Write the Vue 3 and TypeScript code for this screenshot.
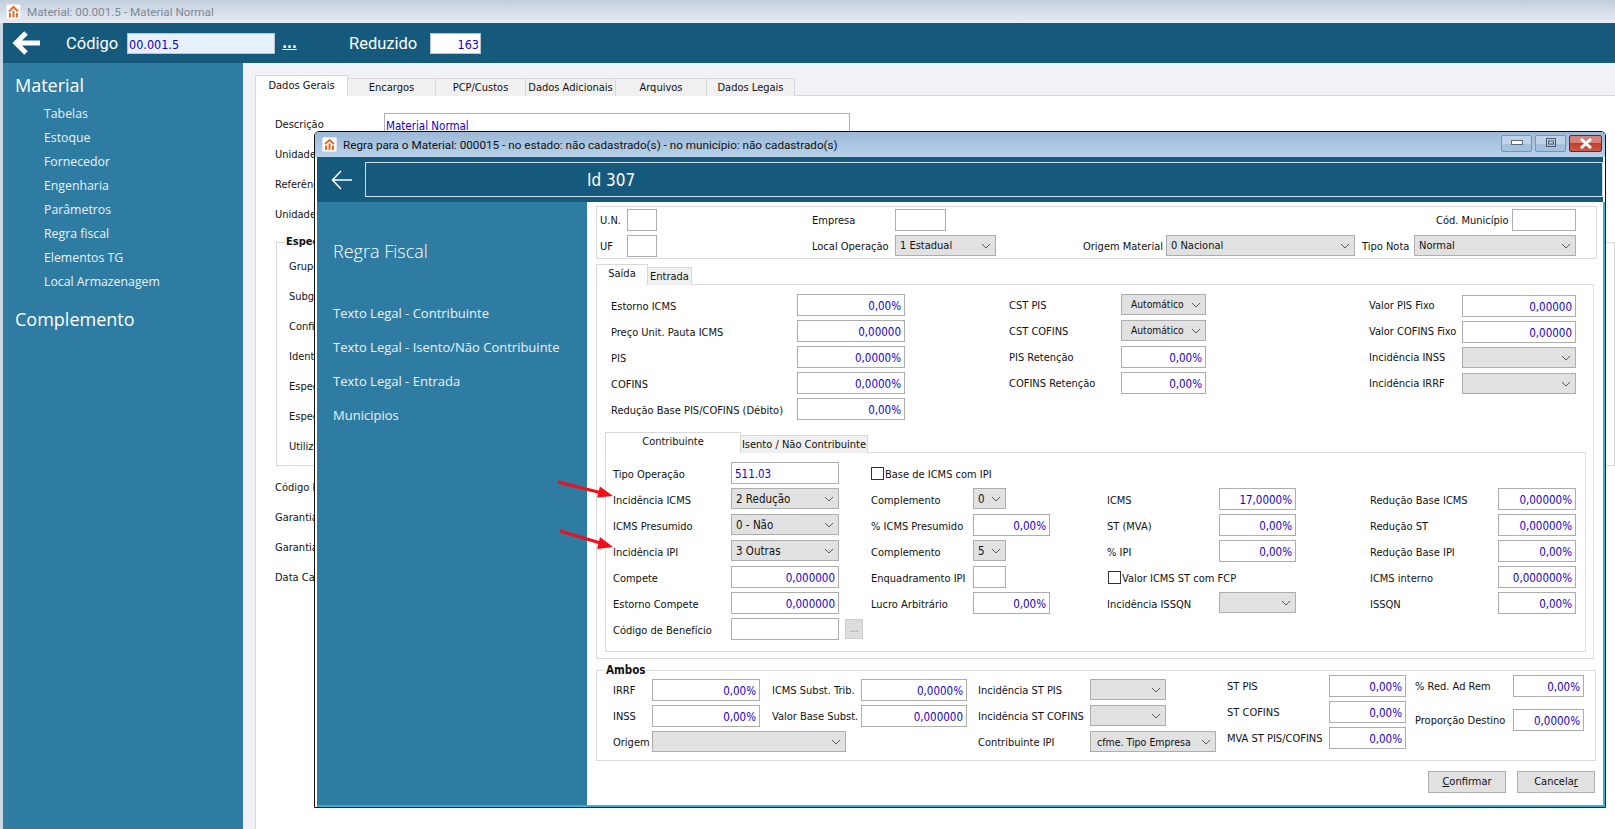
<script setup lang="ts">
import { h } from 'vue'
import type { FunctionalComponent, VNode } from 'vue'

type Fld = { l?: string; lw?: number; k: 'num' | 'sel' | 'txt' | 'box' | 'chk'; v?: string; w?: number; ml?: number; mt?: number; ip?: number; fs?: number }
type Col = { w: number; top: number; lm?: number; rows: Fld[][] }

const chevron = () =>
  h('svg', { class: 'f-chev', width: 10, height: 6, viewBox: '0 0 10 6' }, [
    h('polyline', { points: '1,1 5,5 9,1', fill: 'none', stroke: '#5a5a5a', 'stroke-width': 1 })
  ])

function control(f: Fld): VNode {
  const style = { width: `${f.w}px` }
  if (f.k === 'sel') {
    return h('div', { class: 'f-sel', style }, [
      h('span', { class: 'f-sel-v', style: { paddingLeft: f.ip ? `${f.ip}px` : undefined, fontSize: f.fs ? `${f.fs}px` : undefined } }, f.v ?? ''),
      chevron()
    ])
  }
  if (f.k === 'num') return h('div', { class: 'f-num', style }, f.v ?? '')
  if (f.k === 'txt') return h('div', { class: 'f-txt', style }, f.v ?? '')
  return h('div', { class: 'f-box', style })
}

function field(f: Fld, lm: number): VNode[] {
  const mt = `${lm}px`
  if (f.k === 'chk') {
    return [
      h('span', { class: 'f-check', style: { marginLeft: `${f.ml ?? 0}px` } }),
      h('span', { class: 'f-check-l', style: { marginTop: mt } }, f.l)
    ]
  }
  const out: VNode[] = []
  if (f.l !== undefined) {
    out.push(h('span', { class: 'f-lab', style: { width: `${f.lw}px`, marginLeft: f.ml ? `${f.ml}px` : undefined, marginTop: mt } }, f.l))
  }
  out.push(control(f))
  return out
}

const Cols: FunctionalComponent<{ cols: Col[]; pad?: number }> = (p) =>
  h(
    'div',
    { class: 'f-cols', style: { paddingLeft: `${p.pad ?? 0}px` } },
    p.cols.map((c) =>
      h(
        'div',
        { class: 'f-col', style: { width: `${c.w}px`, marginTop: `${c.top}px` } },
        c.rows.map((r) =>
          h(
            'div',
            { class: 'f-row', style: { marginTop: r[0]?.mt ? `${r[0].mt}px` : undefined } },
            r.flatMap((f) => field(f, c.lm ?? 4))
          )
        )
      )
    )
  )
Cols.props = ['cols', 'pad']

const menu = ['Tabelas', 'Estoque', 'Fornecedor', 'Engenharia', 'Parâmetros', 'Regra fiscal', 'Elementos TG', 'Local Armazenagem']
const rules = ['Texto Legal - Contribuinte', 'Texto Legal - Isento/Não Contribuinte', 'Texto Legal - Entrada', 'Municipios']
const bgTabs = [
  { t: 'Dados Gerais', w: 93, on: true },
  { t: 'Encargos', w: 88 },
  { t: 'PCP/Custos', w: 90 },
  { t: 'Dados Adicionais', w: 90 },
  { t: 'Arquivos', w: 91 },
  { t: 'Dados Legais', w: 88 }
]
const bgGroup = ['Grupo', 'Subgrupo', 'Configuração', 'Identificação', 'Especificação', 'Especificação', 'Utilização']
const bgAfter = ['Código F', 'Garantia', 'Garantia', 'Data Ca']

const topCols: Col[] = [
  { w: 212, top: 2, lm: 2, rows: [[{ l: 'U.N.', lw: 27, k: 'box', w: 30 }], [{ l: 'UF', lw: 27, k: 'box', w: 30 }]] },
  { w: 271, top: 2, lm: 2, rows: [[{ l: 'Empresa', lw: 83, k: 'box', w: 51 }], [{ l: 'Local Operação', lw: 83, k: 'sel', v: '1 Estadual', w: 101, fs: 11 }]] },
  {
    w: 494,
    top: 2,
    lm: 2,
    rows: [
      [{ l: 'Cód. Município', lw: 76, ml: 353, k: 'box', w: 64 }],
      [
        { l: 'Origem Material', lw: 83, k: 'sel', v: '0 Nacional', w: 189, fs: 11 },
        { l: 'Tipo Nota', lw: 52, ml: 7, k: 'sel', v: 'Normal', w: 162, fs: 11 }
      ]
    ]
  }
]

const saidaCols: Col[] = [
  {
    w: 398,
    top: 9,
    rows: [
      [{ l: 'Estorno ICMS', lw: 186, k: 'num', v: '0,00%', w: 108 }],
      [{ l: 'Preço Unit. Pauta ICMS', lw: 186, k: 'num', v: '0,00000', w: 108 }],
      [{ l: 'PIS', lw: 186, k: 'num', v: '0,0000%', w: 108 }],
      [{ l: 'COFINS', lw: 186, k: 'num', v: '0,0000%', w: 108 }],
      [{ l: 'Redução Base PIS/COFINS (Débito)', lw: 186, k: 'num', v: '0,00%', w: 108 }]
    ]
  },
  {
    w: 360,
    top: 9,
    lm: 1,
    rows: [
      [{ l: 'CST PIS', lw: 112, k: 'sel', v: 'Automático', w: 85, ip: 5, fs: 10.2 }],
      [{ l: 'CST COFINS', lw: 112, k: 'sel', v: 'Automático', w: 85, ip: 5, fs: 10.2 }],
      [{ l: 'PIS Retenção', lw: 112, k: 'num', v: '0,00%', w: 85 }],
      [{ l: 'COFINS Retenção', lw: 112, k: 'num', v: '0,00%', w: 85 }]
    ]
  },
  {
    w: 207,
    top: 10,
    lm: -1,
    rows: [
      [{ l: 'Valor PIS Fixo', lw: 93, k: 'num', v: '0,00000', w: 114 }],
      [{ l: 'Valor COFINS Fixo', lw: 93, k: 'num', v: '0,00000', w: 114 }],
      [{ l: 'Incidência INSS', lw: 93, k: 'sel', w: 114 }],
      [{ l: 'Incidência IRRF', lw: 93, k: 'sel', w: 114 }]
    ]
  }
]

const contribCols: Col[] = [
  {
    w: 258,
    top: 9,
    rows: [
      [{ l: 'Tipo Operação', lw: 118, k: 'txt', v: '511.03', w: 108 }],
      [{ l: 'Incidência ICMS', lw: 118, k: 'sel', v: '2 Redução', w: 108 }],
      [{ l: 'ICMS Presumido', lw: 118, k: 'sel', v: '0 - Não', w: 108 }],
      [{ l: 'Incidência IPI', lw: 118, k: 'sel', v: '3 Outras', w: 108 }],
      [{ l: 'Compete', lw: 118, k: 'num', v: '0,000000', w: 108 }],
      [{ l: 'Estorno Compete', lw: 118, k: 'num', v: '0,000000', w: 108 }],
      [{ l: 'Código de Benefício', lw: 118, k: 'box', w: 108 }]
    ]
  },
  {
    w: 236,
    top: 9,
    rows: [
      [{ l: 'Base de ICMS com IPI', k: 'chk' }],
      [{ l: 'Complemento', lw: 102, k: 'sel', v: '0', w: 33 }],
      [{ l: '% ICMS Presumido', lw: 102, k: 'num', v: '0,00%', w: 77 }],
      [{ l: 'Complemento', lw: 102, k: 'sel', v: '5', w: 33 }],
      [{ l: 'Enquadramento IPI', lw: 102, k: 'box', w: 33 }],
      [{ l: 'Lucro Arbitrário', lw: 102, k: 'num', v: '0,00%', w: 77 }]
    ]
  },
  {
    w: 263,
    top: 35,
    rows: [
      [{ l: 'ICMS', lw: 112, k: 'num', v: '17,0000%', w: 77 }],
      [{ l: 'ST (MVA)', lw: 112, k: 'num', v: '0,00%', w: 77 }],
      [{ l: '% IPI', lw: 112, k: 'num', v: '0,00%', w: 77 }],
      [{ l: 'Valor ICMS ST com FCP', k: 'chk', ml: 1 }],
      [{ l: 'Incidência ISSQN', lw: 112, k: 'sel', w: 77 }]
    ]
  },
  {
    w: 206,
    top: 35,
    rows: [
      [{ l: 'Redução Base ICMS', lw: 128, k: 'num', v: '0,00000%', w: 78 }],
      [{ l: 'Redução ST', lw: 128, k: 'num', v: '0,00000%', w: 78 }],
      [{ l: 'Redução Base IPI', lw: 128, k: 'num', v: '0,00%', w: 78 }],
      [{ l: 'ICMS interno', lw: 128, k: 'num', v: '0,000000%', w: 78 }],
      [{ l: 'ISSQN', lw: 128, k: 'num', v: '0,00%', w: 78 }]
    ]
  }
]

const ambosCols: Col[] = [
  {
    w: 159,
    top: 8,
    lm: 1,
    rows: [
      [{ l: 'IRRF', lw: 39, k: 'num', v: '0,00%', w: 108 }],
      [{ l: 'INSS', lw: 39, k: 'num', v: '0,00%', w: 108 }],
      [{ l: 'Origem', lw: 39, k: 'sel', w: 194 }]
    ]
  },
  {
    w: 206,
    top: 8,
    lm: 1,
    rows: [
      [{ l: 'ICMS Subst. Trib.', lw: 89, k: 'num', v: '0,0000%', w: 106 }],
      [{ l: 'Valor Base Subst.', lw: 89, k: 'num', v: '0,000000', w: 106 }]
    ]
  },
  {
    w: 249,
    top: 8,
    lm: 1,
    rows: [
      [{ l: 'Incidência ST PIS', lw: 112, k: 'sel', w: 76 }],
      [{ l: 'Incidência ST COFINS', lw: 112, k: 'sel', w: 76 }],
      [{ l: 'Contribuinte IPI', lw: 112, k: 'sel', v: 'cfme. Tipo Empresa', w: 126, ip: 2, fs: 10.5 }]
    ]
  },
  {
    w: 188,
    top: 4,
    lm: 1,
    rows: [
      [{ l: 'ST PIS', lw: 102, k: 'num', v: '0,00%', w: 77 }],
      [{ l: 'ST COFINS', lw: 102, k: 'num', v: '0,00%', w: 77 }],
      [{ l: 'MVA ST PIS/COFINS', lw: 102, k: 'num', v: '0,00%', w: 77 }]
    ]
  },
  {
    w: 169,
    top: 4,
    lm: 1,
    rows: [
      [{ l: '% Red. Ad Rem', lw: 98, k: 'num', v: '0,00%', w: 71 }],
      [{ l: 'Proporção Destino', lw: 98, k: 'num', v: '0,0000%', w: 71, mt: 8 }]
    ]
  }
]
</script>

<template>
  <div class="app">
    <div class="titlebar">
      <svg class="appicon" width="15" height="16" viewBox="0 0 15 16">
        <rect x="0.5" y="0.5" width="14" height="15" rx="1.5" fill="#fff" stroke="#e4e8ee" />
        <path d="M3 7.500 7.500 3 12 7.500M4 9v4.500M7.500 7v6.500M11 9v4.500" fill="none" stroke="#ee6c20" stroke-width="2" />
      </svg>
      <span>Material: 00.001.5 - Material Normal</span>
    </div>
    <div class="head">
      <svg class="backbig" width="30" height="26" viewBox="0 0 30 26">
        <path d="M28 13H5M14 3 4 13l10 10" fill="none" stroke="#fff" stroke-width="5" />
      </svg>
      <span class="h-lab cod">Código</span>
      <div class="h-in code">00.001.5</div>
      <span class="dots">...</span>
      <span class="h-lab red">Reduzido</span>
      <div class="h-in redu">163</div>
    </div>
    <div class="main">
      <aside class="side">
        <div class="s-title">Material</div>
        <div v-for="m in menu" :key="m" class="s-item">{{ m }}</div>
        <div class="s-title second">Complemento</div>
      </aside>
      <section class="page">
        <div class="tabs">
          <div v-for="t in bgTabs" :key="t.t" class="tab" :class="{ on: t.on }" :style="{ width: t.w + 'px' }">{{ t.t }}</div>
        </div>
        <div class="sheet">
          <div class="bg-row"><span class="bg-l">Descrição</span><div class="bg-in">Material Normal</div></div>
          <div class="bg-row"><span class="bg-l">Unidade</span></div>
          <div class="bg-row"><span class="bg-l">Referência</span></div>
          <div class="bg-row"><span class="bg-l">Unidade</span></div>
          <div class="bg-group">
            <span class="bg-legend">Especificações</span>
            <div v-for="(g, i) in bgGroup" :key="i" class="bg-grow">{{ g }}</div>
          </div>
          <div v-for="(g, i) in bgAfter" :key="'a' + i" class="bg-row"><span class="bg-l">{{ g }}</span></div>
        </div>
      </section>
    </div>

    <div class="dlg">
      <div class="d-title">
        <svg class="d-icon" width="15" height="15" viewBox="0 0 15 15">
          <rect x="0.5" y="0.5" width="14" height="14" rx="1.5" fill="#fff" stroke="#e4e8ee" />
          <path d="M3 7 7.500 3 12 7M4 8.500V13M7.500 6.500V13M11 8.500V13" fill="none" stroke="#ee6c20" stroke-width="2" />
        </svg>
        <span class="d-title-t">Regra para o Material: 000015 - no estado: não cadastrado(s) - no município: não cadastrado(s)</span>
        <div class="wbtns">
          <div class="wb"><svg width="12" height="6" viewBox="0 0 12 6"><rect x="0.500" y="0.500" width="11" height="4" fill="#fff" stroke="#5a6a7c" /></svg></div>
          <div class="wb"><svg width="10" height="10" viewBox="0 0 10 10"><rect x="0.500" y="0.500" width="9" height="8" fill="none" stroke="#4a5a6c" /><rect x="2.500" y="3" width="5" height="3" fill="none" stroke="#4a5a6c" /></svg></div>
          <div class="wb close"><svg width="14" height="11" viewBox="0 0 14 11"><path d="M2 1l10 9M12 1 2 10" stroke="#fff" stroke-width="3" fill="none" /></svg></div>
        </div>
      </div>
      <div class="d-head">
        <svg class="d-back" width="22" height="20" viewBox="0 0 22 20">
          <path d="M21 10H2M10 1 1.500 10l8.500 9" fill="none" stroke="#fff" stroke-width="1.500" />
        </svg>
        <div class="d-id"><span class="d-idt">Id 307</span></div>
      </div>
      <div class="d-body">
        <aside class="d-side">
          <div class="ds-title">Regra Fiscal</div>
          <div v-for="r in rules" :key="r" class="ds-item">{{ r }}</div>
        </aside>
        <div class="d-form">
          <div class="top-box"><Cols :cols="topCols" :pad="3" /></div>
          <div class="ftabs">
            <div class="ftab on saida">Saída</div>
            <div class="ftab entrada">Entrada</div>
          </div>
          <div class="panel">
            <Cols :cols="saidaCols" :pad="14" />
            <div class="ftabs sub">
              <div class="ftab on contrib">Contribuinte</div>
              <div class="ftab isento">Isento / Não Contribuinte</div>
            </div>
            <div class="inner">
              <Cols :cols="contribCols" :pad="7" />
              <div class="benef">...</div>
            </div>
          </div>
          <div class="ambos">
            <span class="legend">Ambos</span>
            <Cols :cols="ambosCols" :pad="16" />
          </div>
          <div class="foot">
            <div class="btn"><u>C</u>onfirmar</div>
            <div class="btn">Cancela<u>r</u></div>
          </div>
        </div>
      </div>
    </div>

    <svg class="redarrows" width="64" height="80" viewBox="0 0 64 80">
      <path d="M2 7 46 18" stroke="#f0101a" stroke-width="3" fill="none" />
      <path d="M57 21 41 22.500 44 11.500z" fill="#f0101a" />
      <path d="M4 56 46 68.500" stroke="#f0101a" stroke-width="3" fill="none" />
      <path d="M57 72 41 74 44 62z" fill="#f0101a" />
    </svg>
  </div>
</template>

<style scoped>
.app {
  position: relative;
  width: 1615px;
  height: 829px;
  overflow: hidden;
  background: #fff;
  font-family: "DejaVu Sans Condensed", "DejaVu Sans", sans-serif;
  font-size: 11px;
  color: #111;
}
.titlebar {
  height: 23px;
  display: flex;
  align-items: center;
  padding-left: 6px;
  background: linear-gradient(#c3cfdd, #e6ecf3);
  color: #7d8894;
  font-family: Roboto, sans-serif;
  font-size: 11.700px;
}
.appicon { margin-right: 6px; }
.head {
  height: 40px;
  background: #155a7c;
  display: flex;
  align-items: center;
  color: #fff;
  border-left: 3px solid #cdd8e5;
}
.backbig { margin-left: 9px; }
.h-lab { font-family: Roboto, sans-serif; font-size: 16.500px; }
.cod { margin-left: 24px; width: 61px; }
.h-in {
  height: 21px;
  line-height: 22px;
  box-sizing: border-box;
  border: 1px solid #b9c4cc;
  color: #1a00c0;
  font-size: 12.500px;
}
.code { width: 148px; background: #e6f1fd; padding-left: 1px; }
.dots { margin-left: 7px; width: 15px; font-weight: bold; font-size: 14px; line-height: 16px; text-decoration: underline; text-align: center; }
.red { margin-left: 52px; width: 81px; }
.redu { width: 51px; background: #fff; text-align: right; padding-right: 1px; }
.main { display: flex; height: 766px; }
.side {
  width: 240px;
  background: #2f7ca3;
  border-left: 3px solid #cdd8e5;
  color: #fff;
  font-family: "Open Sans", sans-serif;
  flex: none;
}
.s-title { font-size: 18px; padding: 10px 0 0 12px; height: 29px; line-height: 24px; }
.s-title.second { padding-top: 13px; }
.s-item { height: 24px; line-height: 24px; padding-left: 41px; font-size: 12.300px; color: #e9f2f7; }
.page { flex: 1; background: #f0f2f8; padding: 12px 0 0 12px; }
.tabs { display: flex; align-items: flex-end; height: 21px; position: relative; z-index: 1; }
.tab {
  height: 18px;
  line-height: 18px;
  box-sizing: border-box;
  background: #f0f0f0;
  border: 1px solid #d9d9d9;
  border-bottom: none;
  border-left: none;
  text-align: center;
  white-space: nowrap;
}
.tab.on { height: 21px; line-height: 19px; background: #fff; border-left: 1px solid #d9d9d9; }
.sheet {
  height: 733px;
  background: #fff;
  border-left: 1px solid #d9d9e0;
  border-top: 1px solid #d9d9d9;
  padding: 17px 0 0 19px;
  margin-top: -1px;
}
.bg-row { height: 30px; display: flex; align-items: flex-start; }
.bg-l { line-height: 24px; width: 109px; flex: none; }
.bg-in {
  width: 466px;
  height: 22px;
  box-sizing: border-box;
  border: 1px solid #b0b0b0;
  color: #1a00c0;
  padding: 3px 1px;
  line-height: 18px;
  font-size: 11.500px;
}
.bg-group {
  position: relative;
  box-sizing: border-box;
  margin: 9px 0 0 1px;
  height: 224px;
  border: 1px solid #d9d9d9;
  padding-top: 13px;
}
.bg-legend { position: absolute; left: 8px; top: -8px; background: #fff; padding: 0 1px; font-weight: bold; }
.bg-grow { height: 30px; line-height: 22px; padding-left: 12px; }
.bg-group + .bg-row { margin-top: 10px; }

.dlg {
  position: absolute;
  left: 314px;
  top: 131px;
  width: 1292px;
  height: 677px;
  box-sizing: border-box;
  background: #fff;
  border: 1px solid #111;
  border-radius: 5px 5px 0 0;
  display: flex;
  flex-direction: column;
}
.d-title {
  height: 25px;
  flex: none;
  display: flex;
  align-items: center;
  padding-left: 7px;
  background: linear-gradient(#9cb8d6, #b8d2ea);
  border-radius: 4px 4px 0 0;
  font-family: Roboto, sans-serif;
  font-size: 11.700px;
  color: #111;
}
.d-icon { margin-right: 6px; }
.d-title-t { flex: 1; }
.wbtns { display: flex; gap: 3px; margin: 0 3px 3px 0; }
.wb {
  width: 31px;
  height: 17px;
  box-sizing: border-box;
  border: 1px solid #7d93ac;
  border-radius: 2px;
  background: linear-gradient(#bfd3e8 0 50%, #a4c0dc 50%);
  display: flex;
  align-items: center;
  justify-content: center;
}
.wb.close { width: 33px; background: linear-gradient(#d68078 0 45%, #c13a25 45%, #c9594a); border-color: #6a2530; }
.d-head {
  height: 45px;
  flex: none;
  display: flex;
  align-items: center;
  background: #155a7c;
  margin: 0 2px;
}
.d-back { margin-left: 14px; }
.d-id {
  margin-left: 12px;
  flex: 1;
  height: 35px;
  box-sizing: border-box;
  border: 1px solid #cfdde6;
  color: #fff;
  font-size: 17px;
  line-height: 34px;
}
.d-idt { margin-left: 221px; }
.d-body {
  flex: 1;
  display: flex;
  min-height: 0;
  margin: 0 2px;
  border-bottom: 2px solid #35b0d6;
  box-shadow: 2px 0 0 #35b0d6;
}
.d-side {
  width: 270px;
  flex: none;
  background: #2f7ca3;
  color: #e9f2f7;
  font-family: "Open Sans", sans-serif;
  padding-left: 16px;
  box-sizing: border-box;
}
.ds-title { font-size: 18px; font-weight: 300; color: #fff; margin-top: 36px; height: 65px; line-height: 26px; }
.ds-item { height: 34px; line-height: 20px; font-size: 13px; }
.d-form { flex: 1; min-width: 0; background: #fff; padding: 4px 6px 0 9px; }
.top-box { height: 53px; box-sizing: border-box; border: 1px solid #dcdcdc; }
.ftabs { display: flex; align-items: flex-end; height: 21px; margin-top: 5px; position: relative; z-index: 1; margin-bottom: -1px; }
.ftabs.sub { margin: 12px 0 -1px 8px; }
.ftab {
  box-sizing: border-box;
  border: 1px solid #d9d9d9;
  border-bottom: none;
  border-left: none;
  background: #f0f0f0;
  height: 18px;
  line-height: 18px;
  text-align: center;
  white-space: nowrap;
}
.ftab.on { background: #fff; height: 21px; line-height: 18px; border-left: 1px solid #d9d9d9; }
.saida { width: 52px; }
.entrada { width: 44px; }
.contrib { width: 136px; }
.isento { width: 127px; }
.panel { width: 998px; height: 375px; box-sizing: border-box; border: 1px solid #dcdcdc; }
.inner { position: relative; width: 981px; margin-left: 8px; height: 200px; box-sizing: border-box; border: 1px solid #dcdcdc; }
.benef {
  position: absolute;
  left: 239px;
  top: 166px;
  width: 18px;
  height: 20px;
  background: #dcdcdc;
  color: #8a8a8a;
  border: 1px solid #cfcfcf;
  box-sizing: border-box;
  text-align: center;
  line-height: 18px;
  font-size: 10px;
}
.ambos { position: relative; margin-top: 11px; width: 1000px; height: 91px; box-sizing: border-box; border: 1px solid #dcdcdc; }
.legend { position: absolute; left: 8px; top: -8px; padding: 0 1px; background: #fff; font-weight: bold; line-height: 14px; font-size: 11.500px; }
.foot { display: flex; justify-content: flex-end; gap: 11px; margin: 10px 2px 0 0; }
.btn {
  width: 78px;
  height: 22px;
  box-sizing: border-box;
  background: #e1e1e1;
  border: 1px solid #adadad;
  text-align: center;
  line-height: 20px;
}
.redarrows { position: absolute; left: 556px; top: 475px; }
</style>

<style>
.f-cols { display: flex; align-items: flex-start; }
.f-col { flex: none; display: flex; flex-direction: column; gap: 4px; }
.f-row { display: flex; align-items: center; height: 22px; white-space: nowrap; }
.f-lab { flex: none; line-height: 14px; }
.f-num, .f-txt, .f-box {
  flex: none;
  box-sizing: border-box;
  height: 22px;
  background: #fff;
  border: 1px solid #adadad;
  color: #1a00c0;
  line-height: 22px;
  font-size: 11.500px;
}
.f-num { text-align: right; padding-right: 3px; }
.f-txt { padding-left: 3px; }
.f-sel {
  flex: none;
  box-sizing: border-box;
  height: 21px;
  background: #e1e1e1;
  border: 1px solid #adadad;
  display: flex;
  align-items: center;
  justify-content: space-between;
  padding: 0 4px 0 4px;
  color: #111;
  margin-top: -1px;
  line-height: 20px;
  font-size: 11.500px;
}
.f-sel-v { overflow: hidden; white-space: nowrap; }
.f-chev { flex: none; }
.f-check { flex: none; width: 13px; height: 13px; box-sizing: border-box; border: 1px solid #333; background: #fff; margin-right: 1px; }
.f-check-l { line-height: 14px; }
</style>
